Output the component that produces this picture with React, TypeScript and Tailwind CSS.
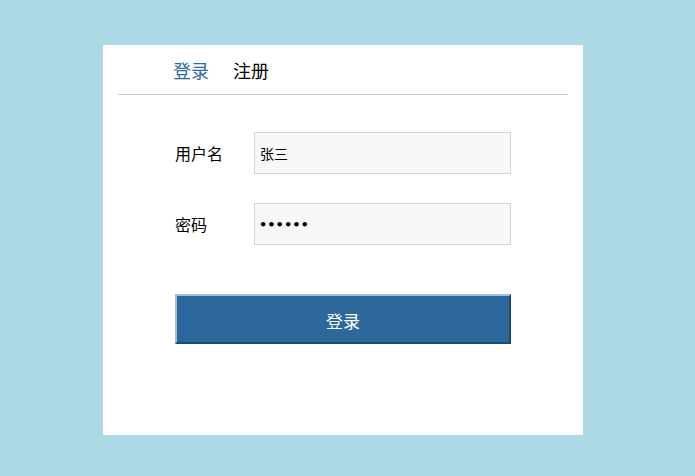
import React from "react";

export default function App() {
  const font = { fontFamily: '"Noto Sans CJK SC", "Noto Sans", sans-serif' };
  return (
    <div className="w-[695px] h-[476px] bg-[#add8e6] pt-[45px] pl-[103px]" style={font}>
      <div className="w-[480px] h-[390px] bg-white">
        <div className="mx-[15px] h-[50px] border-b border-[#cccccc] flex items-center pl-[55px] gap-[24px] text-[18px] leading-none">
          <span className="text-[#2c6aa0]">登录</span>
          <span className="text-black">注册</span>
        </div>
        <div className="pl-[72px] pt-[37px]">
          <div className="flex items-center h-[42px]">
            <span className="w-[79px] text-[16px] text-black">用户名</span>
            <input
              readOnly
              value="张三"
              className="w-[257px] h-[42px] bg-[#f8f8f8] border border-[#d3d6d9] pl-[5px] text-[14px] text-black outline-none"
              style={font}
            />
          </div>
          <div className="flex items-center h-[42px] mt-[29px]">
            <span className="w-[79px] text-[16px] text-black">密码</span>
            <input
              readOnly
              type="password"
              value="123456"
              className="w-[257px] h-[42px] bg-[#f8f8f8] border border-[#d3d6d9] pl-[4px] text-[13px] font-bold text-black outline-none"
              style={{ fontFamily: '"DejaVu Sans", sans-serif' }}
            />
          </div>
          <button className="mt-[49px] w-[336px] h-[50px] bg-[#2c689b] border-2 border-solid [border-top-color:#a4bcd1] [border-left-color:#a4bcd1] [border-right-color:#1d4a6f] [border-bottom-color:#1d4a6f] text-white text-[17px] flex items-center justify-center pt-[3px]">
            登录
          </button>
        </div>
      </div>
    </div>
  );
}
